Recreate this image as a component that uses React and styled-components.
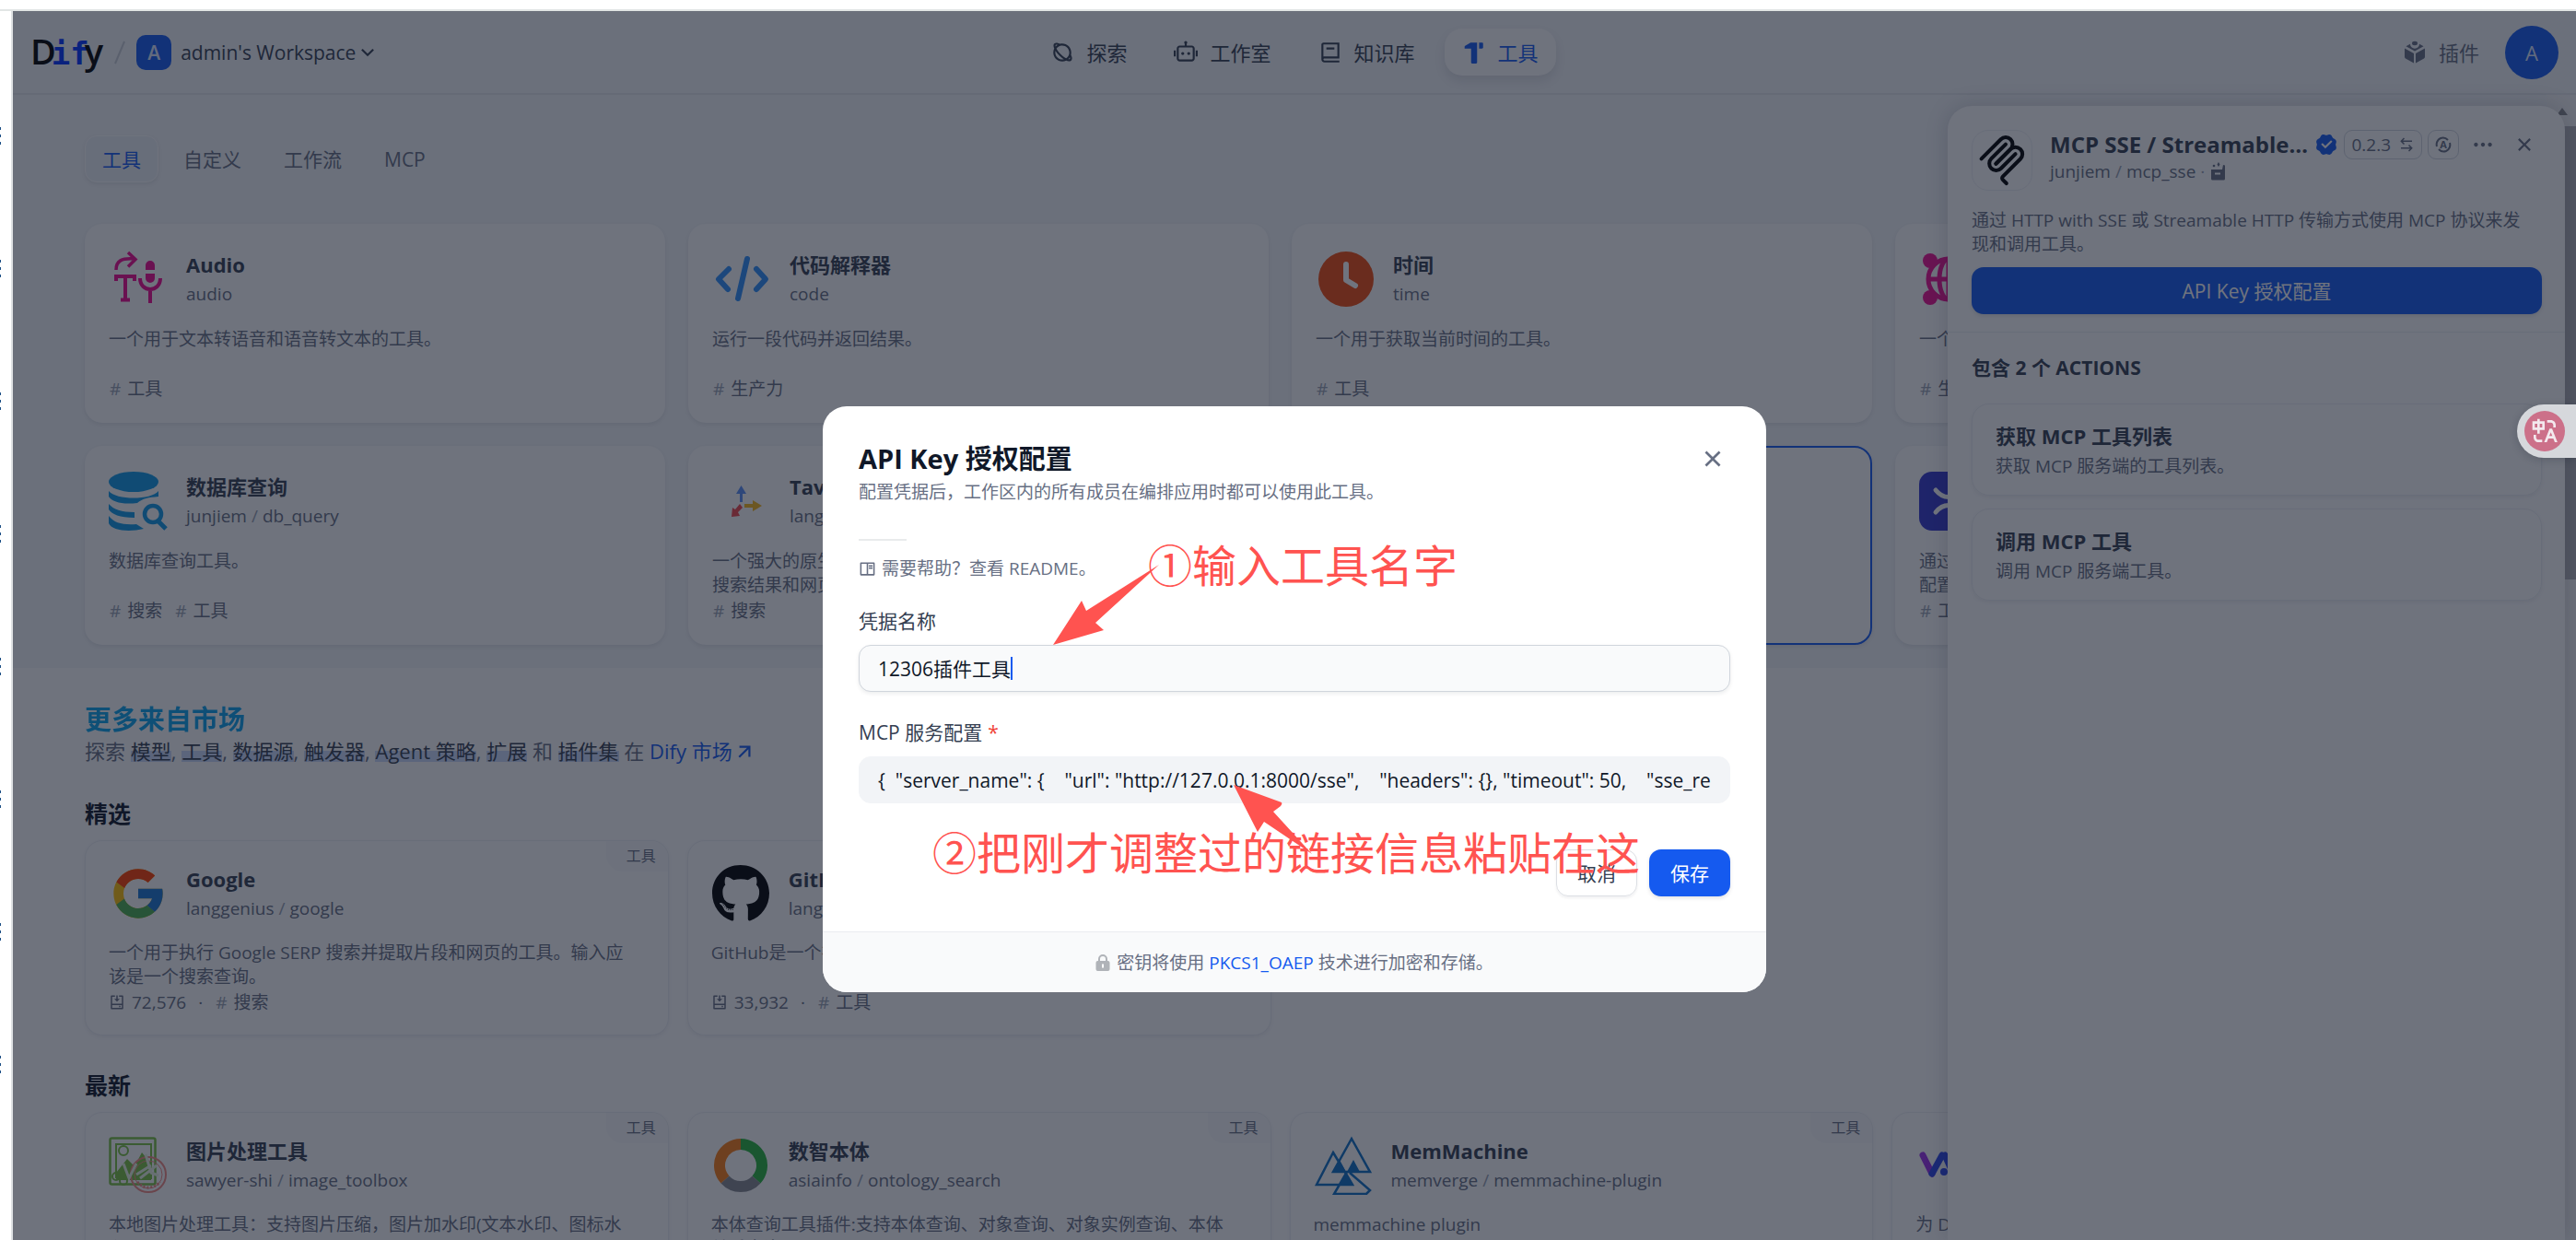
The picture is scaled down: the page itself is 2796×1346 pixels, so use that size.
import React from 'react';
import styled, { createGlobalStyle, css } from 'styled-components';
import {
  RiPlanetLine, RiRobot2Line, RiBook2Line, RiHammerFill, RiArrowDownSLine, RiArrowRightUpLine,
  RiInstallLine, RiVerifiedBadgeFill, RiArrowLeftRightLine, RiMoreFill, RiCloseLine,
  RiBookReadLine, RiTranslate,
} from 'react-icons/ri';
import { FcGoogle } from 'react-icons/fc';
import { FaGithub } from 'react-icons/fa';

const c = {
  primary: '#101828',
  secondary: '#354052',
  tertiary: '#676f83',
  faint: '#98a2b2',
  accent: '#155aef',
  line: '#e4e7ec',
  body: '#f2f4f7',
  note: '#ff5350',
};

const Global = createGlobalStyle`
  * { box-sizing: border-box; }
  body {
    margin: 0;
    font-family: "Open Sans", "Noto Sans CJK SC", sans-serif;
    font-size: 19px;
    line-height: 26px;
    color: ${c.tertiary};
    background: #fff;
  }
  h1, h2, h3, p { margin: 0; }
  button, input { font: inherit; color: inherit; border: 0; padding: 0; background: none; }
  button { cursor: pointer; }
  a { text-decoration: none; color: ${c.accent}; }
  svg { display: block; flex: none; }
`;

const Window = styled.div`
  display: flex;
  flex-direction: column;
  height: 100vh;
  overflow: hidden;
`;
const TopEdge = styled.div`
  flex: none;
  height: 12px;
  border-bottom: 2px solid #e2e6e5;
`;
const Body = styled.div`
  flex: 1;
  min-height: 0;
  display: flex;
`;
const SideStrip = styled.div`
  flex: none;
  width: 14px;
  border-right: 2px solid #dfe2e4;
  display: flex;
  flex-direction: column;
  gap: 124px;
  padding-top: 126px;
`;
const Sliver = styled.i`
  flex: none;
  width: 1px;
  height: 20px;
  background: repeating-linear-gradient(#1c4f86 0 3px, #fff 3px 8px);
`;
const Shell = styled.div`
  flex: 1;
  min-width: 0;
  position: relative;
  overflow: hidden;
  display: flex;
  flex-direction: column;
  background: ${c.body};
`;

/* header */
const Header = styled.header`
  flex: none;
  height: 91px;
  padding: 0 19px;
  display: grid;
  grid-template-columns: 1fr auto 1fr;
  align-items: center;
  border-bottom: 2px solid ${c.line};
`;
const Brand = styled.div`
  display: flex;
  align-items: center;
`;
const Logo = styled.a`
  display: flex;
  align-items: baseline;
  color: #000;
  font-size: 38px;
  line-height: 48px;
  font-weight: 600;
`;
const LogoAccent = styled.span`
  font-family: "DejaVu Sans Mono", monospace;
  font-size: 34px;
  font-weight: 700;
  color: #0033ff;
  margin: 0 -5px;
`;
const Slash = styled.svg`
  margin: 0 12px;
`;
const WorkspaceButton = styled.button`
  display: flex;
  align-items: center;
  color: ${c.secondary};
  font-size: 21px;
`;
const WorkspaceIcon = styled.span`
  width: 38px;
  height: 38px;
  border-radius: 10px;
  background: ${c.accent};
  color: #dbe6ff;
  font-weight: 600;
  line-height: 38px;
  margin-right: 10px;
`;
const Nav = styled.nav`
  display: flex;
  gap: 13px;
`;
const NavLink = styled.a`
  display: flex;
  align-items: center;
  gap: 13px;
  height: 51px;
  padding: 0 19px;
  border-radius: 19px;
  font-size: 22px;
  color: ${c.secondary};
  ${p => p.$active && css`
    background: #fcfcfd;
    color: ${c.accent};
    box-shadow: 0 6px 12px rgba(16, 24, 40, 0.1);
  `}
`;
const Account = styled.div`
  display: flex;
  justify-content: flex-end;
  align-items: center;
`;
const PluginLink = styled.a`
  display: flex;
  align-items: center;
  gap: 13px;
  margin-right: 28px;
  font-size: 22px;
  color: ${c.tertiary};
`;
const Avatar = styled.button`
  width: 58px;
  height: 58px;
  border-radius: 50%;
  background: ${c.accent};
  color: #dbe6ff;
  font-size: 22px;
`;

/* page */
const Page = styled.div`
  flex: 1;
  min-height: 0;
  display: flex;
`;
const Content = styled.main`
  flex: 1;
  min-width: 0;
  overflow: hidden;
`;
const ScrollTrack = styled.div`
  flex: none;
  width: 31px;
  background: #f4f4f5;
  display: flex;
  flex-direction: column;
  align-items: center;
  padding-top: 14px;
  gap: 12px;
`;
const ScrollThumb = styled.div`
  width: 100%;
  height: 492px;
  background: #b4b4b8;
`;
const Toolbox = styled.section`
  padding: 44px 78px 25px;
`;
const Tabs = styled.div`
  display: flex;
  gap: 8px;
  margin-bottom: 45px;
`;
const Tab = styled.button`
  height: 51px;
  padding: 0 18px;
  border: 1px solid transparent;
  border-radius: 13px;
  font-size: 21px;
  color: ${c.tertiary};
  ${p => p.$active && css`
    color: ${c.accent};
    background: #eceff4;
    border-color: #fcfcfd;
    box-shadow: 0 2px 4px rgba(16, 24, 40, 0.08);
  `}
`;
const ToolGrid = styled.div`
  display: grid;
  grid-template-columns: repeat(4, minmax(0, 1fr));
  gap: 25px;
`;
const ToolCard = styled.article`
  height: 216px;
  padding: 28px 26px 0;
  border-radius: 19px;
  background: #fcfcfd;
  box-shadow: 0 2px 4px rgba(16, 24, 40, 0.08);
  ${p => p.$selected && css`
    outline: 2px solid ${c.accent};
    outline-offset: -2px;
  `}
`;
const CardHead = styled.div`
  display: flex;
  gap: 20px;
  height: 64px;
  line-height: 32px;
`;
const IconBox = styled.div`
  flex: none;
  width: 64px;
  height: 64px;
  display: grid;
  place-items: center;
`;
const CardTitle = styled.h3`
  font-size: 22px;
  line-height: 32px;
  font-weight: 700;
  color: ${c.secondary};
  white-space: nowrap;
`;
const Path = styled.div`
  display: flex;
  align-items: center;
  white-space: nowrap;
`;
const PathSlash = styled.span`
  color: ${c.faint};
  margin: 0 5px;
`;
const CardText = styled.p`
  height: 52px;
  margin: ${p => (p.$market ? '19px' : '20px')} 0 2px;
  padding-right: 14px;
  overflow: hidden;
  white-space: pre-line;
`;
const TagRow = styled.div`
  display: flex;
  align-items: center;
  gap: 13px;
`;
const Tag = styled.span`
  &::before { content: '#'; color: ${c.faint}; margin: 0 7px 0 1px; }
`;
const Installs = styled.span`
  display: flex;
  align-items: center;
  gap: 7px;
`;

const Market = styled.section`
  padding: 38px 78px 0;
  background: #fcfcfd;
`;
const MarketTitle = styled.h2`
  font-size: 29px;
  line-height: 36px;
  font-weight: 600;
  background: linear-gradient(90deg, #0ba5ec, #155aef);
  background-clip: text;
  color: transparent;
`;
const MarketLine = styled.p`
  height: 32px;
  font-size: 22px;
  line-height: 32px;
`;
const Mark = styled.span`
  display: inline-block;
  line-height: 24px;
  color: ${c.secondary};
  background: linear-gradient(transparent 50%, #cbdafb 50%);
`;
const MarketLink = styled.a`
  svg { display: inline-block; vertical-align: -5px; }
`;
const Collection = styled.section`
  margin-top: ${p => (p.$first ? '33px' : '35px')};
`;
const CollectionTitle = styled.h2`
  font-size: 25px;
  line-height: 38px;
  font-weight: 700;
  color: ${c.primary};
  margin-bottom: 10px;
`;
const MarketGrid = styled(ToolGrid)`
  gap: 20px;
`;
const MarketCard = styled.article`
  position: relative;
  height: 212px;
  padding: 25px 25px 0;
  border: 1px solid #eceef2;
  border-radius: 19px;
  background: #fcfcfd;
  box-shadow: 0 2px 4px rgba(16, 24, 40, 0.06);
  overflow: hidden;
`;
const Corner = styled.span`
  position: absolute;
  top: 0;
  right: 0;
  padding: 3px 13px 4px 22px;
  font-size: 16px;
  line-height: 26px;
  background: #f7f8fa;
  border-bottom-left-radius: 18px;
`;

/* drawer */
const Drawer = styled.aside`
  position: absolute;
  top: 103px;
  right: 12px;
  bottom: 0;
  width: 670px;
  border-radius: 26px 26px 0 0;
  background: #fcfcfd;
  box-shadow: 0 0 24px rgba(16, 24, 40, 0.18);
`;
const DrawerTop = styled.div`
  padding: 26px 25px 19px 26px;
  border-bottom: 1px solid #eceef2;
`;
const DrawerHead = styled.div`
  display: flex;
  gap: 19px;
  margin-bottom: 19px;
`;
const DrawerIcon = styled.div`
  flex: none;
  width: 66px;
  height: 66px;
  border: 1px solid #eceef2;
  border-radius: 18px;
  display: grid;
  place-items: center;
`;
const DrawerInfo = styled.div`
  flex: 1;
  min-width: 0;
`;
const DrawerTitleRow = styled.div`
  display: flex;
  align-items: center;
  height: 32px;
`;
const DrawerTitle = styled.h2`
  flex: 1;
  min-width: 0;
  margin-right: 5px;
  font-size: 24px;
  line-height: 32px;
  font-weight: 700;
  color: ${c.secondary};
  overflow: hidden;
  text-overflow: ellipsis;
  white-space: nowrap;
`;
const DrawerDesc = styled.p`
  padding-right: 16px;
`;
const Chip = styled.button`
  display: flex;
  align-items: center;
  gap: 8px;
  height: 32px;
  padding: 0 7px;
  margin-left: 6px;
  border: 1px solid #cfd4dc;
  border-radius: 9px;
`;
const IconButton = styled.button`
  display: grid;
  place-items: center;
  width: 38px;
  height: 38px;
  margin-left: ${p => p.$gap || 0}px;
  color: ${c.tertiary};
`;
const PrimaryButton = styled.button`
  height: 51px;
  border-radius: 13px;
  background: ${c.accent};
  color: #fff;
  font-size: 21px;
  box-shadow: 0 2px 4px rgba(16, 24, 40, 0.12);
  width: ${p => (p.$wide ? '100%' : '88px')};
  margin-top: ${p => (p.$wide ? '12px' : '0')};
`;
const Actions = styled.section`
  padding: 22px 25px 0 26px;
  display: flex;
  flex-direction: column;
  gap: 14px;
`;
const ActionsTitle = styled.h3`
  font-size: 21px;
  line-height: 32px;
  margin-bottom: 9px;
  font-weight: 700;
  color: ${c.secondary};
`;
const Action = styled.article`
  height: 100px;
  padding: 18px 25px;
  border: 1px solid #eceef2;
  border-radius: 19px;
  box-shadow: 0 2px 4px rgba(16, 24, 40, 0.06);
  p { margin-top: 4px; }
`;

/* modal */
const Backdrop = styled.div`
  position: absolute;
  inset: 0;
  display: flex;
  justify-content: center;
  align-items: flex-start;
  padding-top: 429px;
  background: rgba(16, 24, 40, 0.6);
`;
const Modal = styled.form`
  position: relative;
  width: 1024px;
  border-radius: 26px;
  background: #fff;
`;
const ModalBody = styled.div`
  padding: 38px 39px;
  display: flex;
  flex-direction: column;
`;
const ModalHead = styled.div`
  display: flex;
  justify-content: space-between;
  align-items: center;
  height: 38px;
`;
const ModalTitle = styled.h1`
  font-size: 29px;
  line-height: 38px;
  font-weight: 700;
  color: ${c.primary};
`;
const ModalDesc = styled.p`
  margin-top: 4px;
`;
const Rule = styled.div`
  width: 52px;
  height: 2px;
  margin: 38px 0 17px;
  background: #e9ebec;
`;
const Help = styled.a`
  display: flex;
  align-items: center;
  gap: 6px;
  color: ${c.tertiary};
`;
const Label = styled.label`
  margin: 31px 0 13px;
  font-size: 21px;
  line-height: 26px;
  color: ${c.secondary};
`;
const Required = styled.span`
  color: #f04438;
  margin-left: 6px;
`;
const Field = styled.div`
  display: flex;
  align-items: center;
  height: 51px;
  padding: 0 20px;
  border: 1px solid ${p => (p.$focus ? '#d0d5dc' : c.body)};
  border-radius: 13px;
  background: ${p => (p.$focus ? '#f9fafb' : c.body)};
  box-shadow: ${p => (p.$focus ? '0 2px 4px rgba(16, 24, 40, 0.08)' : 'none')};
`;
const TextInput = styled.input`
  min-width: 0;
  flex: ${p => (p.$fit ? 'none' : '1')};
  field-sizing: ${p => (p.$fit ? 'content' : 'fixed')};
  outline: 0;
  font-size: 21px;
  line-height: 26px;
  color: ${c.primary};
`;
const Caret = styled.i`
  width: 2px;
  height: 25px;
  background: ${c.accent};
`;
const ButtonRow = styled.div`
  display: flex;
  justify-content: flex-end;
  gap: 13px;
  margin-top: 50px;
`;
const CancelButton = styled.button`
  width: 88px;
  height: 51px;
  border: 1px solid #dcdfe4;
  border-radius: 13px;
  font-size: 21px;
  color: ${c.secondary};
  box-shadow: 0 2px 3px rgba(16, 24, 40, 0.06);
`;
const ModalFoot = styled.footer`
  display: flex;
  justify-content: center;
  align-items: center;
  gap: 7px;
  height: 66px;
  border-top: 1px solid #eaecf0;
  border-radius: 0 0 26px 26px;
  background: #f9fafb;
`;
const NoteArrows = styled.svg`
  position: absolute;
  inset: 0;
  pointer-events: none;
`;
const Note = styled.span`
  position: absolute;
  left: ${p => p.$x}px;
  top: ${p => p.$y}px;
  font-family: "Noto Sans CJK SC", sans-serif;
  font-size: 48px;
  line-height: 48px;
  color: ${c.note};
  white-space: nowrap;
`;
const TranslateTab = styled.button`
  position: absolute;
  right: 0;
  top: 427px;
  width: 64px;
  height: 58px;
  padding-left: 8px;
  border-radius: 29px 0 0 29px;
  background: #d6d8dc;
  box-shadow: 0 2px 10px rgba(16, 24, 40, 0.2);
`;
const TranslateDot = styled.span`
  display: grid;
  place-items: center;
  width: 44px;
  height: 44px;
  border-radius: 50%;
  background: #cc7089;
  color: #f3e9ee;
`;

/* drawings */
const PluginIcon = () => (
  <svg width="26" height="26" viewBox="0 0 26 26" fill="currentColor">
    <path d="M2 8.5 12 14v10.5L3 19.4a2 2 0 0 1-1-1.7zM24 8.5 14 14v10.5l9-5.1a2 2 0 0 0 1-1.7z" />
    <path d="M3.5 6.2 8 3.8a5 5 0 0 0 10 0l4.500 2.400L13 11.600z" />
    <ellipse cx="13" cy="3" rx="3" ry="2.200" />
  </svg>
);
const AudioIcon = () => (
  <svg width="64" height="64" viewBox="0 0 64 64" fill="none" stroke="#f0088f" strokeWidth="3.500">
    <path d="M8 22C8 12 14 9 28 10M21 3l8 7.500-8 8" />
    <path d="M8 34v-5h20v5M18 29v25M13 54.500h10" strokeWidth="4" />
    <path d="M34 31c0 16 22 16 22 0M45 43v15" strokeWidth="4" />
    <path d="M40 17a5 5 0 0 1 10 0v5H40zM40 26h10v5a5 5 0 0 1-10 0z" fill="#f0088f" stroke="none" />
  </svg>
);
const CodeIcon = () => (
  <svg width="64" height="64" viewBox="0 0 64 64" fill="none" stroke="#2e90fa" strokeWidth="6" strokeLinecap="round" strokeLinejoin="round">
    <path d="M18 21 7 32l10 11M48 21l10 11-10 11M38 10 28 53" />
  </svg>
);
const TimeIcon = () => (
  <svg width="64" height="64" viewBox="0 0 64 64">
    <circle cx="33" cy="32" r="30" fill="#f04c0f" />
    <path d="M33 16v17l10 6" fill="none" stroke="#fff" strokeWidth="6" strokeLinecap="round" strokeLinejoin="round" />
  </svg>
);
const WebIcon = () => (
  <svg width="64" height="64" viewBox="0 0 64 64" fill="none" stroke="#ee0f92" strokeWidth="5">
    <circle cx="32" cy="32" r="22" /><path d="M10 32h44M32 10v44" /><ellipse cx="32" cy="32" rx="10" ry="22" />
    <g fill="#ee0f92" stroke="none"><circle cx="12" cy="12" r="8" /><circle cx="12" cy="52" r="8" /><circle cx="52" cy="12" r="8" /><circle cx="52" cy="52" r="8" /></g>
  </svg>
);
const DatabaseIcon = () => (
  <svg width="64" height="64" viewBox="0 0 64 64" fill="#0f9ae6">
    <ellipse cx="27" cy="11" rx="27" ry="11" />
    <path d="M0 21c8 10 46 10 54 0v6c-11 1-17 2-23 7-16 2-27-1-31-7z" />
    <path d="M0 35c5 6 14 9 28 9v6C12 50 3 46 0 41zM0 48c6 8 16 10 30 9l8 5C22 66 3 64 0 56z" />
    <circle cx="48" cy="46" r="9" fill="none" stroke="#0f9ae6" strokeWidth="4.500" />
    <path d="m53 53 9 9" stroke="#0f9ae6" strokeWidth="5" />
  </svg>
);
const AxesIcon = () => (
  <svg width="64" height="64" viewBox="0 0 64 64">
    <path d="M30 33V24h-4l5.500-9 5.500 9h-4v9z" fill="#5a8ff5" />
    <path d="M35 35h9v-4l10 6-10 6v-4h-9z" fill="#f4b61c" />
    <path d="m30 35 3 4-5 5 2 4-9 1 1-10 3 2z" fill="#f0474b" />
  </svg>
);
const CrossIcon = () => (
  <svg width="64" height="64" viewBox="0 0 64 64" fill="none" stroke="#fff" strokeWidth="5" strokeLinecap="round">
    <rect width="64" height="64" rx="14" fill="#3538cd" stroke="none" />
    <path d="M18 20c8 10 20 10 28 0M18 44c8-10 20-10 28 0" />
  </svg>
);
const ImageIcon = () => (
  <svg width="64" height="64" viewBox="0 0 64 64" fill="none">
    <rect x="1.500" y="2.500" width="49" height="50" rx="2" stroke="#7ac143" strokeWidth="2.500" />
    <path d="M8 46V9h38v38" stroke="#7ac143" strokeWidth="2" />
    <circle cx="16" cy="16" r="5" stroke="#7ac143" strokeWidth="2" />
    <path d="m8 40 12-15 8 8 8-15 10 12v18H8z" fill="#7ac143" />
    <circle cx="43" cy="42" r="19" stroke="#f08a83" strokeWidth="2" />
    <circle cx="43" cy="42" r="15" stroke="#f08a83" strokeWidth="1" />
    <path d="m16 30 6 16 8-16M30 42l16-10M34 46l18-14M40 20l6 20 8 3" stroke="#e8f2e2" strokeWidth="3" />
    <circle cx="8" cy="44" r="4" stroke="#7ac143" strokeWidth="2" />
    <circle cx="16" cy="49" r="4" stroke="#7ac143" strokeWidth="2" />
    <path d="M31 50q12 12 25 0" stroke="#f08a83" strokeWidth="3" strokeDasharray="2 2" />
  </svg>
);
const RingIcon = () => (
  <svg width="64" height="64" viewBox="0 0 64 64" fill="none" strokeWidth="12">
    <path d="M32 9a23 23 0 0 1 17 38.500" stroke="#28b43c" />
    <path d="M32 9a23 23 0 0 0-17 38.500" stroke="#fa7d14" />
    <path d="M15 47.500a23 23 0 0 0 34 0" stroke="#85888f" />
  </svg>
);
const TrianglesIcon = () => (
  <svg width="64" height="64" viewBox="0 0 64 64" fill="none" stroke="#0d6fc4" strokeWidth="2.500">
    <path d="m41 3 20 36H21zM21 18l21 35H3zM39 40l22 19-4 4H22l14-24" />
    <path d="m28 26 7 13H21zM43 26l7 13H36zM35 39l8 14H28z" fill="#0d6fc4" stroke="none" />
  </svg>
);
const VIcon = () => (
  <svg width="64" height="64" viewBox="0 0 64 64" fill="none" strokeWidth="7" strokeLinecap="round">
    <path d="m8 21 10 20" stroke="#9b30e8" /><path d="m18 41 11-20" stroke="#2b45e8" />
    <circle cx="31" cy="39" r="4" fill="#2b45e8" /><path d="m32 21 9 20" stroke="#2b45e8" />
  </svg>
);
const McpLogo = () => (
  <svg width="56" height="56" viewBox="0 0 180 180" fill="none" stroke="#000" strokeWidth="13" strokeLinecap="round">
    <path d="M18 84.853 85.882 16.971c9.373-9.373 24.569-9.373 33.941 0 9.373 9.372 9.373 24.568 0 33.941l-51.265 51.265" />
    <path d="m69.265 101.470 50.558-50.558c9.373-9.373 24.569-9.373 33.942 0l.353.353c9.373 9.373 9.373 24.569 0 33.941L92.725 146.600c-3.124 3.124-3.124 8.189 0 11.313l12.606 12.607" />
    <path d="M102.853 33.941 52.648 84.146c-9.372 9.372-9.372 24.568 0 33.941 9.373 9.372 24.569 9.372 33.941 0l50.205-50.205" />
  </svg>
);
const AutoIcon = () => (
  <svg width="18" height="18" viewBox="0 0 18 18" fill="none" stroke="currentColor" strokeWidth="2">
    <path d="M6 2a7.500 7.500 0 0 0-4 9M12 16a7.500 7.500 0 0 0 4-9M4 14a7.500 7.500 0 0 0 8 2M14 4a7.500 7.500 0 0 0-8-2" />
    <text x="9" y="13" fontSize="11" fontWeight="700" textAnchor="middle" fill="currentColor" stroke="none">A</text>
  </svg>
);
const PackageIcon = () => (
  <svg width="18" height="20" viewBox="0 0 18 20" fill="currentColor">
    <path d="M2 8h12l1-5 2 .4V18a1.500 1.500 0 0 1-1.500 1.500h-12A1.500 1.500 0 0 1 2 18z" />
    <path d="M6 12.500h6" stroke="#fff" strokeWidth="2" /><circle cx="5" cy="4" r="1.300" /><path d="m10 0 1.500 2.500L10 5 8.500 2.500z" />
  </svg>
);
const LockIcon = () => (
  <svg width="16" height="18" viewBox="0 0 16 18">
    <path d="M4 8V5a4 4 0 0 1 8 0v3" fill="none" stroke="#b0b3b8" strokeWidth="2" />
    <rect x="0.500" y="7" width="15" height="11" rx="2" fill="#b0b3b8" />
    <path d="M8 10.500v4" stroke="#fff" strokeWidth="2" />
  </svg>
);

const navItems = [
  { icon: RiPlanetLine, text: '探索' },
  { icon: RiRobot2Line, text: '工作室' },
  { icon: RiBook2Line, text: '知识库' },
  { icon: RiHammerFill, text: '工具', active: true },
];
const tools = [
  { icon: AudioIcon, name: 'Audio', path: ['audio'], text: '一个用于文本转语音和语音转文本的工具。', tags: ['工具'] },
  { icon: CodeIcon, name: '代码解释器', path: ['code'], text: '运行一段代码并返回结果。', tags: ['生产力'] },
  { icon: TimeIcon, name: '时间', path: ['time'], text: '一个用于获取当前时间的工具。', tags: ['工具'] },
  { icon: WebIcon, name: '网页抓取', path: ['webscraper'], text: '一个用于抓取网页的工具。', tags: ['生产力'] },
  { icon: DatabaseIcon, name: '数据库查询', path: ['junjiem', 'db_query'], text: '数据库查询工具。', tags: ['搜索', '工具'] },
  { icon: AxesIcon, name: 'Tavily', path: ['langgenius', 'tavily'], text: '一个强大的原生AI搜索引擎和网页检索工具\n搜索结果和网页内容提取。', tags: ['搜索'] },
  { icon: McpLogo, name: 'MCP SSE', path: ['junjiem', 'mcp_sse'], text: '调用 MCP 服务端工具。', tags: ['工具'], selected: true },
  { icon: CrossIcon, name: 'MCP', path: ['mcp'], text: '通过 MCP 协议调用工具\n配置服务端信息。', tags: ['工具'] },
];
const featured = [
  { icon: () => <FcGoogle size={64} />, name: 'Google', path: ['langgenius', 'google'], text: '一个用于执行 Google SERP 搜索并提取片段和网页的工具。输入应该是一个搜索查询。', installs: '72,576', tags: ['搜索'] },
  { icon: () => <FaGithub size={64} color="#000" />, name: 'GitHub', path: ['langgenius', 'github'], text: 'GitHub是一个在线软件源代码托管服务。', installs: '33,932', tags: ['工具'] },
];
const latest = [
  { icon: ImageIcon, name: '图片处理工具', path: ['sawyer-shi', 'image_toolbox'], text: '本地图片处理工具：支持图片压缩，图片加水印(文本水印、图标水印)', tags: ['工具'] },
  { icon: RingIcon, name: '数智本体', path: ['asiainfo', 'ontology_search'], text: '本体查询工具插件:支持本体查询、对象查询、对象实例查询、本体关系查询', tags: ['工具'] },
  { icon: TrianglesIcon, name: 'MemMachine', path: ['memverge', 'memmachine-plugin'], text: 'memmachine plugin', tags: ['工具'] },
  { icon: VIcon, name: 'VA', path: ['va', 'va'], text: '为 Dify 提供工具', tags: ['工具'] },
];
const marks = ['模型', '工具', '数据源', '触发器', 'Agent 策略', '扩展'];
const actions = [
  ['获取 MCP 工具列表', '获取 MCP 服务端的工具列表。'],
  ['调用 MCP 工具', '调用 MCP 服务端工具。'],
];
const config = '{  "server_name": {    "url": "http://127.0.0.1:8000/sse",    "headers": {}, "timeout": 50,    "sse_read_timeout": 50  } }';

const Org = ({ path }) => (
  <>{path[0]}{path[1] && <><PathSlash>/</PathSlash>{path[1]}</>}</>
);
const CardInner = ({ item, market }) => (
  <>
    <CardHead>
      <IconBox><item.icon /></IconBox>
      <div><CardTitle>{item.name}</CardTitle><Path><Org path={item.path} /></Path></div>
    </CardHead>
    <CardText $market={market}>{item.text}</CardText>
    <TagRow>
      {item.installs && <><Installs><RiInstallLine size={18} />{item.installs}</Installs><span>·</span></>}
      {item.tags.map(t => <Tag key={t}>{t}</Tag>)}
    </TagRow>
  </>
);
const MarketSection = ({ title, items, first }) => (
  <Collection $first={first}>
    <CollectionTitle>{title}</CollectionTitle>
    <MarketGrid>
      {items.map(i => <MarketCard key={i.name}><CardInner item={i} market /><Corner>工具</Corner></MarketCard>)}
    </MarketGrid>
  </Collection>
);

export default function App() {
  const [name, setName] = React.useState('12306插件工具');
  const [conf, setConf] = React.useState(config);
  return (
    <Window>
      <Global />
      <TopEdge />
      <Body>
        <SideStrip aria-hidden="true">{[...Array(8)].map((_, i) => <Sliver key={i} />)}</SideStrip>
        <Shell>
          <Header>
            <Brand>
              <Logo href="#home">D<LogoAccent>if</LogoAccent>y</Logo>
              <Slash width="12" height="26" stroke="#c8cdd5" strokeWidth="2"><path d="M11 1 1 25" /></Slash>
              <WorkspaceButton type="button">
                <WorkspaceIcon>A</WorkspaceIcon>admin's Workspace<RiArrowDownSLine size={26} />
              </WorkspaceButton>
            </Brand>
            <Nav>
              {navItems.map(n => (
                <NavLink key={n.text} href="#nav" $active={n.active}><n.icon size={26} />{n.text}</NavLink>
              ))}
            </Nav>
            <Account>
              <PluginLink href="#plugins"><PluginIcon />插件</PluginLink>
              <Avatar type="button">A</Avatar>
            </Account>
          </Header>
          <Page>
            <Content>
              <Toolbox>
                <Tabs>
                  {['工具', '自定义', '工作流', 'MCP'].map((t, i) => <Tab key={t} type="button" $active={i === 0}>{t}</Tab>)}
                </Tabs>
                <ToolGrid>
                  {tools.map(t => <ToolCard key={t.name} $selected={t.selected}><CardInner item={t} /></ToolCard>)}
                </ToolGrid>
              </Toolbox>
              <Market>
                <MarketTitle>更多来自市场</MarketTitle>
                <MarketLine>
                  {'探索 '}
                  {marks.map((m, i) => <React.Fragment key={m}><Mark>{m}</Mark>{i < marks.length - 1 ? ', ' : ' '}</React.Fragment>)}
                  {'和 '}<Mark>插件集</Mark>{' 在 '}
                  <MarketLink href="#market">Dify 市场<RiArrowRightUpLine size={26} /></MarketLink>
                </MarketLine>
                <MarketSection title="精选" items={featured} first />
                <MarketSection title="最新" items={latest} />
              </Market>
            </Content>
            <ScrollTrack>
              <svg width="12" height="8"><path d="M6 0l6 8H0z" fill="#8a8a8e" /></svg>
              <ScrollThumb />
            </ScrollTrack>
          </Page>
          <Drawer>
            <DrawerTop>
              <DrawerHead>
                <DrawerIcon><McpLogo /></DrawerIcon>
                <DrawerInfo>
                  <DrawerTitleRow>
                    <DrawerTitle>MCP SSE / Streamable HTTP</DrawerTitle>
                    <RiVerifiedBadgeFill size={26} color={c.accent} />
                    <Chip type="button">0.2.3<RiArrowLeftRightLine size={18} /></Chip>
                    <Chip type="button" aria-label="自动更新"><AutoIcon /></Chip>
                    <IconButton type="button" aria-label="更多" $gap={7}><RiMoreFill size={26} /></IconButton>
                    <IconButton type="button" aria-label="关闭" $gap={7}><RiCloseLine size={26} /></IconButton>
                  </DrawerTitleRow>
                  <Path><Org path={['junjiem', 'mcp_sse']} /><PathSlash>·</PathSlash><PackageIcon /></Path>
                </DrawerInfo>
              </DrawerHead>
              <DrawerDesc>通过 HTTP with SSE 或 Streamable HTTP 传输方式使用 MCP 协议来发现和调用工具。</DrawerDesc>
              <PrimaryButton type="button" $wide>API Key 授权配置</PrimaryButton>
            </DrawerTop>
            <Actions>
              <ActionsTitle>包含 2 个 ACTIONS</ActionsTitle>
              {actions.map(([t, d]) => <Action key={t}><CardTitle>{t}</CardTitle><p>{d}</p></Action>)}
            </Actions>
          </Drawer>
          <Backdrop>
            <Modal onSubmit={e => e.preventDefault()}>
              <ModalBody>
                <ModalHead>
                  <ModalTitle>API Key 授权配置</ModalTitle>
                  <IconButton type="button" aria-label="关闭"><RiCloseLine size={32} /></IconButton>
                </ModalHead>
                <ModalDesc>配置凭据后，工作区内的所有成员在编排应用时都可以使用此工具。</ModalDesc>
                <Rule />
                <Help href="#readme"><RiBookReadLine size={19} />需要帮助？查看 README。</Help>
                <Label htmlFor="name">凭据名称</Label>
                <Field $focus>
                  <TextInput id="name" $fit value={name} onChange={e => setName(e.target.value)} /><Caret />
                </Field>
                <Label htmlFor="conf">MCP 服务配置<Required>*</Required></Label>
                <Field><TextInput id="conf" value={conf} onChange={e => setConf(e.target.value)} /></Field>
                <ButtonRow>
                  <CancelButton type="button">取消</CancelButton>
                  <PrimaryButton type="submit">保存</PrimaryButton>
                </ButtonRow>
              </ModalBody>
              <ModalFoot>
                <LockIcon /><span>密钥将使用 <a href="#oaep">PKCS1_OAEP</a> 技术进行加密和存储。</span>
              </ModalFoot>
              <NoteArrows width="1024" height="636" fill={c.note}>
                <path d="m250 259 31-48 5 11 79-50-69 63 9 8zM446 411l52 19q1 2-1 4l-8 6 42 46-52-35-7 11z" />
              </NoteArrows>
              <Note $x={353} $y={146}>①输入工具名字</Note>
              <Note $x={119} $y={458}>②把刚才调整过的链接信息粘贴在这</Note>
            </Modal>
          </Backdrop>
          <TranslateTab type="button" aria-label="翻译"><TranslateDot><RiTranslate size={32} /></TranslateDot></TranslateTab>
        </Shell>
      </Body>
    </Window>
  );
}
